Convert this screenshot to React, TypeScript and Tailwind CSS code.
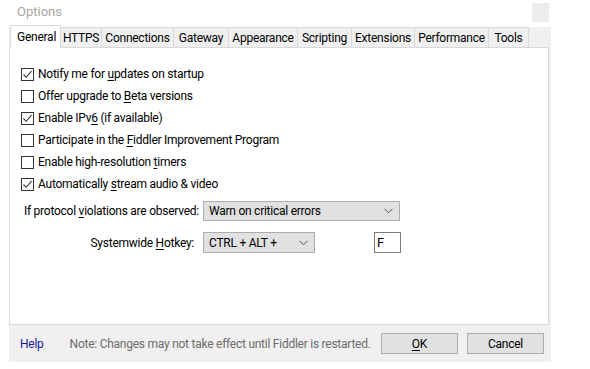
import React from 'react';

const tabs = [
  { name: 'HTTPS', w: 'w-[42px]' },
  { name: 'Connections', w: 'w-[73px]' },
  { name: 'Gateway', w: 'w-[56px]' },
  { name: 'Appearance', w: 'w-[70px]' },
  { name: 'Scripting', w: 'w-[55px]' },
  { name: 'Extensions', w: 'w-[64px]' },
  { name: 'Performance', w: 'w-[75px]' },
  { name: 'Tools', w: 'w-[41px]' },
];

const Check: React.FC<{ checked?: boolean }> = ({ checked }) => (
  <div className="w-[13px] h-[13px] border border-[#333] bg-white flex items-center justify-center shrink-0">
    {checked && (
      <svg width="11" height="11" viewBox="0 0 11 11">
        <polyline points="1.5,5.5 4.2,8.3 9.5,2.2" fill="none" stroke="#333" strokeWidth="1.1" />
      </svg>
    )}
  </div>
);

const Chevron: React.FC = () => (
  <svg width="9" height="6" viewBox="0 0 9 6">
    <polyline points="0.5,0.8 4.5,4.8 8.5,0.8" fill="none" stroke="#555" strokeWidth="1" />
  </svg>
);

const U: React.FC<{ children: React.ReactNode }> = ({ children }) => (
  <span className="underline underline-offset-2">{children}</span>
);

export default function App() {
  const options: { checked: boolean; label: React.ReactNode }[] = [
    { checked: true, label: <>Notify me for <U>u</U>pdates on startup</> },
    { checked: false, label: <>Offer upgrade to <U>B</U>eta versions</> },
    { checked: true, label: <>Enable IPv<U>6</U> (if available)</> },
    { checked: false, label: <>Participate in the <U>F</U>iddler Improvement Program</> },
    { checked: false, label: <>Enable high-resolution <U>t</U>imers</> },
    { checked: true, label: <>Automatically <U>s</U>tream audio &amp; video</> },
  ];

  return (
    <div className="w-[590px] h-[369px] bg-white overflow-hidden whitespace-nowrap text-[12px] text-black tracking-[-0.25px] font-['Roboto',sans-serif]">
      <div className="h-[27px] flex items-start">
        <div className="pl-[17px] pt-[2px] text-[13px] text-[#a6a6a6] tracking-normal">Options</div>
        <div className="ml-auto mr-[41px] mt-[3px] w-[17px] h-[19px] bg-[#ececec]" />
      </div>

      <div className="ml-[9px] w-[542px] h-[335px] bg-[#f0f0f0] flex flex-col">
        <div className="h-[20px] flex items-end">
          <div className="relative z-10 ml-px w-[51px] h-[23px] -mb-px bg-white border border-b-0 border-[#d9d9d9] flex items-start pl-[6px] pt-[2px] leading-[18px]">
            General
          </div>
          {tabs.map((t) => (
            <div
              key={t.name}
              className={`${t.w} -ml-px h-[20px] border border-b-0 border-[#d9d9d9] flex items-center justify-center leading-none`}
            >
              {t.name}
            </div>
          ))}
        </div>

        <div className="w-[540px] h-[279px] bg-white border border-[#d9d9d9] pt-[15px] pl-[11px]">
          {options.map((o, i) => (
            <div key={i} className="h-[22px] flex items-center gap-[4px]">
              <Check checked={o.checked} />
              <span className="leading-none">{o.label}</span>
            </div>
          ))}

          <div className="flex items-center mt-[6px] h-[20px]">
            <span className="ml-[1px] w-[177px] shrink-0 text-right leading-none">
              If protocol <U>v</U>iolations are observed:
            </span>
            <div className="ml-[4px] w-[197px] shrink-0 h-[20px] bg-[#e1e1e1] border border-[#adadad] flex items-center pl-[5px] pr-[6px]">
              <span className="leading-none">Warn on critical errors</span>
              <span className="ml-auto flex"><Chevron /></span>
            </div>
          </div>

          <div className="flex items-center mt-[11px] h-[21px]">
            <span className="w-[173px] shrink-0 text-right leading-none">
              Systemwide <U>H</U>otkey:
            </span>
            <div className="ml-[9px] w-[112px] shrink-0 h-[21px] bg-[#e1e1e1] border border-[#adadad] flex items-center pl-[5px] pr-[6px]">
              <span className="leading-none">CTRL + ALT +</span>
              <span className="ml-auto flex"><Chevron /></span>
            </div>
            <div className="ml-[59px] w-[27px] shrink-0 h-[21px] bg-white border border-[#7a7a7a] flex items-center pl-[2px] leading-none text-[13px]">
              F
            </div>
          </div>
        </div>

        <div className="h-[37px] flex items-center">
          <span className="ml-[11px] text-[#1a1aa0] leading-none">Help</span>
          <span className="ml-[26px] text-[#6d6d6d] leading-none">
            Note: Changes may not take effect until Fiddler is restarted.
          </span>
          <div className="ml-auto shrink-0 w-[77px] h-[21px] bg-[#e1e1e1] border border-[#adadad] flex items-center justify-center leading-none">
            <U>O</U>K
          </div>
          <div className="ml-[9px] mr-[7px] shrink-0 w-[77px] h-[21px] bg-[#e1e1e1] border border-[#adadad] flex items-center justify-center leading-none">
            Cancel
          </div>
        </div>
      </div>
    </div>
  );
}
